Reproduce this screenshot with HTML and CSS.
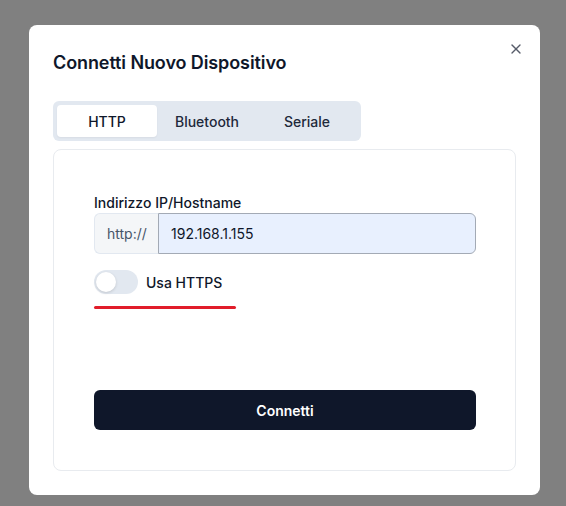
FILE: index.html
```html
<!DOCTYPE html>
<html lang="it">
<head>
<meta charset="utf-8">
<title>Connetti Nuovo Dispositivo</title>
<link rel="stylesheet" href="styles.css">
</head>
<body>
  <div class="dialog" role="dialog">
    <button class="close" aria-label="Chiudi">
      <svg viewBox="0 0 24 24" width="16" height="16" fill="none" stroke="currentColor" stroke-width="2" stroke-linecap="round" stroke-linejoin="round"><path d="M18 6 6 18"/><path d="m6 6 12 12"/></svg>
    </button>
    <h2 class="title">Connetti Nuovo Dispositivo</h2>
    <div class="tabs">
      <button class="tab active">HTTP</button>
      <button class="tab">Bluetooth</button>
      <button class="tab">Seriale</button>
    </div>
    <div class="card">
      <label class="label">Indirizzo IP/Hostname</label>
      <div class="input-group">
        <span class="prefix">http://</span>
        <span class="input">192.168.1.155</span>
      </div>
      <div class="switch-row">
        <span class="switch"><span class="knob"></span></span>
        <span class="switch-label">Usa HTTPS</span>
      </div>
      <div class="redline"></div>
      <button class="primary">Connetti</button>
    </div>
  </div>
</body>
</html>
```

FILE: styles.css
```css
* { box-sizing: border-box; }
html, body { margin: 0; }
body {
  background: #808080;
  font-family: Inter, "Noto Sans", sans-serif;
  color: #0f172a;
  padding: 25px 0 0 29px;
  height: 506px;
  overflow: hidden;
}
.dialog {
  position: relative;
  width: 511px;
  height: 470px;
  background: #ffffff;
  border-radius: 8px;
  padding: 24px;
}
.close {
  position: absolute;
  top: 16px;
  right: 16px;
  width: 16px;
  height: 16px;
  padding: 0;
  border: 0;
  background: none;
  color: #0f172a;
  opacity: 0.7;
  display: flex;
}
.title {
  margin: 0 0 24px;
  font-size: 18px;
  line-height: 28px;
  font-weight: 600;
  letter-spacing: -0.1px;
  color: #0f172a;
}
.tabs {
  display: grid;
  grid-template-columns: repeat(3, 100px);
  width: 308px;
  height: 40px;
  padding: 4px;
  background: #e2e8f0;
  border-radius: 6px;
}
.tab {
  border: 0;
  background: transparent;
  font-family: inherit;
  font-size: 14px;
  font-weight: 500;
  color: #1e293b;
  border-radius: 4px;
  padding: 0;
}
.tab.active {
  background: #ffffff;
  color: #0f172a;
  box-shadow: 0 1px 2px rgba(0,0,0,0.05);
}
.card {
  margin-top: 8px;
  height: 322px;
  border: 1px solid #e8ebef;
  border-radius: 8px;
  padding: 43px 39px 40px 40px;
  display: flex;
  flex-direction: column;
}
.label {
  font-size: 14px;
  line-height: 20px;
  font-weight: 500;
  color: #0f172a;
}
.input-group {
  display: flex;
  height: 41px;
}
.prefix {
  display: flex;
  align-items: center;
  padding: 0 12px;
  width: 64px;
  background: #f4f6f8;
  border: 1px solid #e2e8f0;
  border-right: 0;
  border-radius: 6px 0 0 6px;
  font-size: 14px;
  color: #475569;
}
.input {
  flex: 1;
  display: flex;
  align-items: center;
  padding: 0 12px;
  background: #e8f0fe;
  border: 1.5px solid #a3aab5;
  border-radius: 0 6px 6px 0;
  font-size: 14px;
  color: #0f172a;
}
.switch-row {
  margin-top: 16px;
  display: flex;
  align-items: center;
  gap: 8px;
  height: 24px;
}
.switch {
  width: 44px;
  height: 24px;
  border-radius: 12px;
  background: #e2e8f0;
  padding: 2px;
  display: flex;
}
.knob {
  width: 20px;
  height: 20px;
  border-radius: 50%;
  background: #ffffff;
  box-shadow: 0 1px 3px rgba(0,0,0,0.15);
}
.switch-label {
  font-size: 14px;
  font-weight: 500;
  color: #0f172a;
}
.redline {
  margin-top: 12px;
  width: 142px;
  height: 3px;
  border-radius: 2px;
  background: #e11d2a;
}
.primary {
  margin-top: auto;
  height: 40px;
  width: 100%;
  border: 0;
  border-radius: 6px;
  background: #0f172a;
  color: #ffffff;
  font-family: inherit;
  font-size: 14px;
  font-weight: 600;
}
```
